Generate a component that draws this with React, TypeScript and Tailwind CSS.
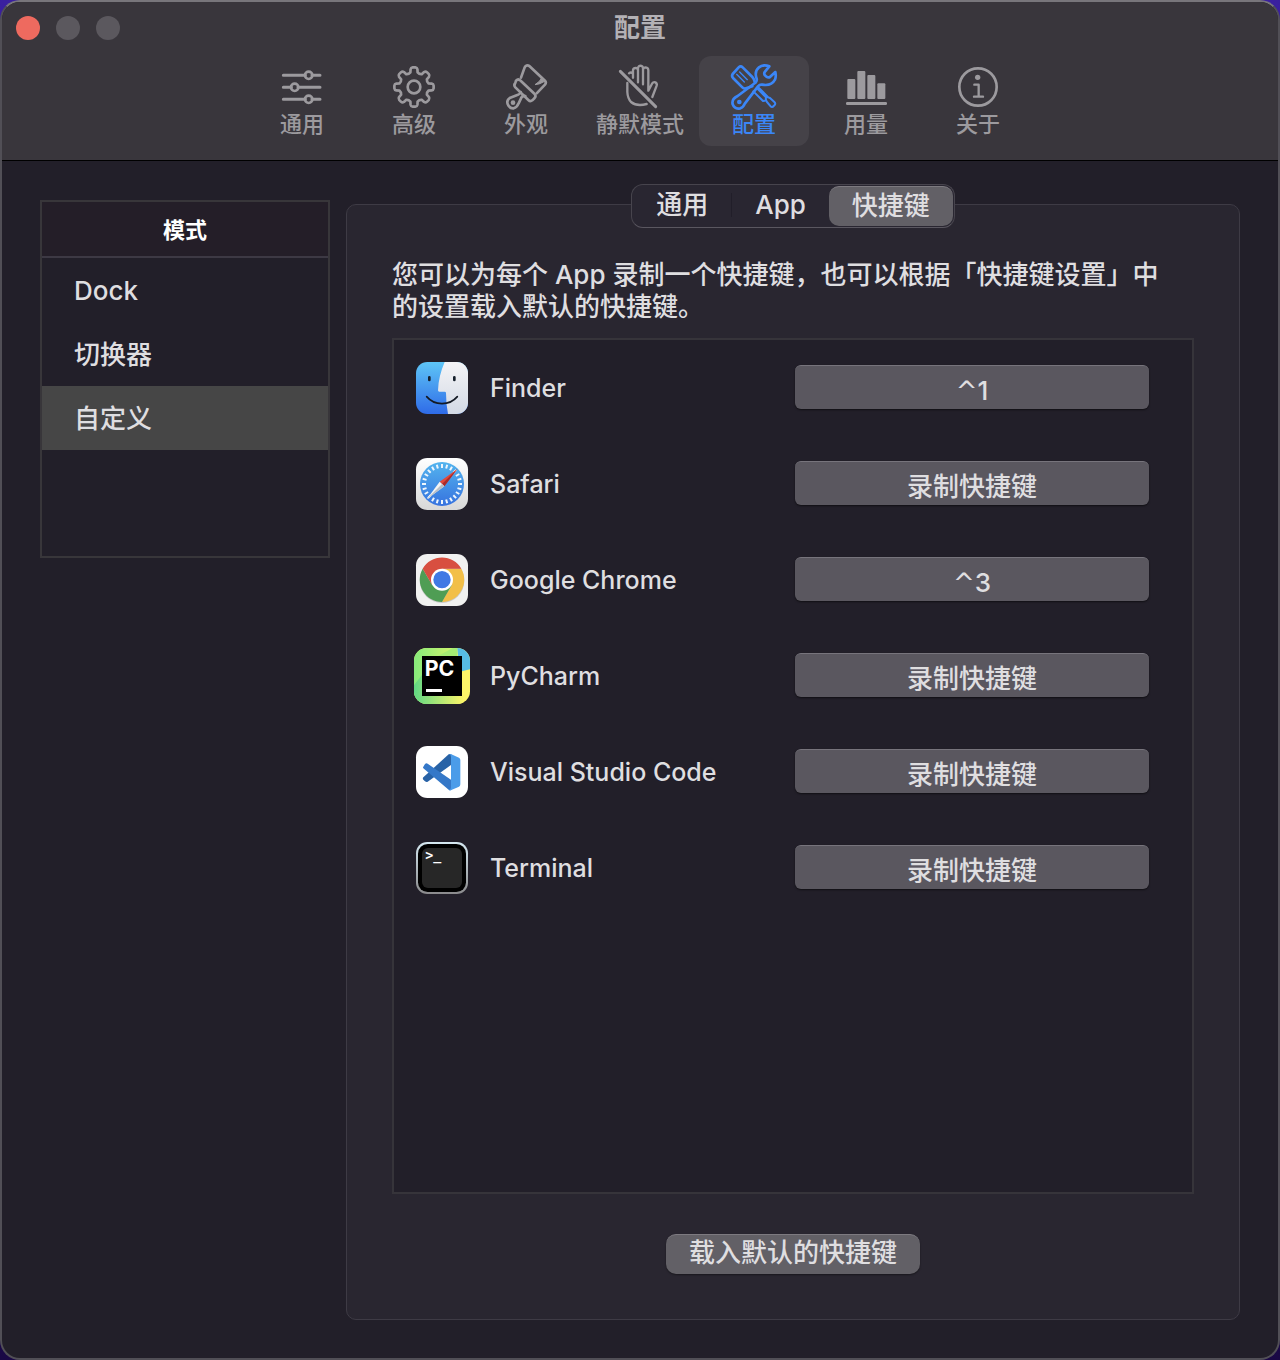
import { useState, type ReactNode } from "react";

type IconProps = { viewBox: string; children: ReactNode };

function ToolIcon({ viewBox, children }: IconProps) {
  return (
    <svg
      viewBox={viewBox}
      className="h-12 w-14"
      fill="none"
      stroke="currentColor"
      strokeWidth={8}
      strokeLinecap="round"
      strokeLinejoin="round"
      aria-hidden="true"
    >
      {children}
    </svg>
  );
}

function gearPath() {
  const point = (r: number, deg: number) => {
    const a = ((deg - 90) * Math.PI) / 180;
    return `${(r * Math.cos(a)).toFixed(1)} ${(r * Math.sin(a)).toFixed(1)}`;
  };
  let d = "";
  for (let i = 0; i < 8; i++) {
    const c = i * 45;
    d += `${i === 0 ? "M" : "L"}${point(45, c - 14)}`;
    d += `L${point(54, c - 11)}Q${point(59, c - 9)} ${point(59, c - 4)}`;
    d += `L${point(59, c + 4)}Q${point(59, c + 9)} ${point(54, c + 11)}`;
    d += `L${point(45, c + 14)}Q${point(41, c + 22.5)} ${point(45, c + 31)}`;
  }
  return d + "Z";
}

const toolbar = [
  {
    label: "通用",
    icon: (
      <ToolIcon viewBox="-84 -72 168 144">
        <path d="M-56-35H10M30-35H54M-56 1H-32M-12 1H54M-56 37H10M30 37H54" strokeWidth={9} />
        <circle cx="20" cy="-35" r="11" />
        <circle cx="-22" cy="1" r="11" />
        <circle cx="20" cy="37" r="11" />
      </ToolIcon>
    ),
  },
  {
    label: "高级",
    icon: (
      <ToolIcon viewBox="-84 -72 168 144">
        <path d={gearPath()} />
        <circle r="19" />
      </ToolIcon>
    ),
  },
  {
    label: "外观",
    icon: (
      <ToolIcon viewBox="54 39 168 144">
        <path d="M123 83 134 52Q139 43 148 48L195 92Q200 98 195 104L170 130" />
        <path d="M186 82Q181 95 165 104Q180 103 192 95Z" fill="currentColor" strokeWidth={3} />
        <path d="M108 92Q115 85 122 92L164 132Q169 138 164 144L157 151Q151 156 145 150L106 112Q100 105 106 99Z" />
        <path d="M122 126Q120 133 110 136L91 143Q79 150 83 162Q88 176 101 175Q111 172 116 160L123 145Q126 136 136 138" />
        <circle cx="99" cy="158" r="7" fill="currentColor" stroke="none" />
      </ToolIcon>
    ),
  },
  {
    label: "静默模式",
    icon: (
      <ToolIcon viewBox="393 39 168 144">
        <path d="M418 64 524 170" strokeWidth={9} />
        <path d="M444 70Q450 65 456 71V83M456 71V60Q457 54 464 54Q471 54 471 61V97M471 60V54Q473 47 479 47Q486 48 486 55V103M486 58Q488 52 494 52Q502 53 502 61V122L513 101Q517 95 523 97Q529 100 527 107L514 141" strokeWidth={7} />
        <path d="M439 99V126Q440 145 450 156Q467 170 497 162" strokeWidth={7} />
      </ToolIcon>
    ),
  },
  {
    label: "配置",
    icon: (
      <ToolIcon viewBox="108 39 168 144">
        <path d="M187 109 168 115Q162 117 157 112L129 84Q124 78 128 72L146 52Q152 46 158 52L187 81Q192 86 194 95L196 98" />
        <path d="M140 73 163 96M149 66 172 89" strokeWidth={4} />
        <path d="M202 116 228 142Q226 150 231 156L242 169Q246 174 251 168L254 165Q258 161 253 156L240 144Q234 141 229 141M190 124 219 153L224 152M206 113 235 142" strokeWidth={6} />
        <path d="M238 49Q220 42 207 52Q192 65 200 86Q202 93 195 99L143 138Q124 147 128 163Q134 179 151 175Q160 172 165 160L204 109Q209 103 217 104Q244 109 255 89Q259 80 256 66L240 81Q235 84 229 80L224 75Q221 70 225 65Z" />
        <circle cx="148" cy="156" r="7" fill="currentColor" stroke="none" />
      </ToolIcon>
    ),
  },
  {
    label: "用量",
    icon: (
      <ToolIcon viewBox="444 39 168 144">
        <g fill="currentColor" stroke="none">
          <rect x="472" y="87" width="24" height="60" rx="3" />
          <rect x="502" y="63" width="24" height="84" rx="3" />
          <rect x="532" y="75" width="24" height="72" rx="3" />
          <rect x="562" y="100" width="24" height="47" rx="3" />
          <rect x="468" y="156" width="123" height="9" rx="4" />
        </g>
      </ToolIcon>
    ),
  },
  {
    label: "关于",
    icon: (
      <ToolIcon viewBox="150 189 168 144">
        <circle cx="234" cy="261" r="56" />
        <circle cx="233" cy="232" r="8" fill="currentColor" stroke="none" />
        <path d="M223 254H236V289M222 290H249" strokeWidth={7} />
      </ToolIcon>
    ),
  },
];

function AppSvg({ children }: { children: ReactNode }) {
  return (
    <svg viewBox="0 0 168 168" className="size-14 shrink-0" aria-hidden="true">
      {children}
    </svg>
  );
}

const ticks = Array.from({ length: 24 }, (_, i) => i * 15);

const apps = [
  {
    name: "Finder",
    digit: "1",
    icon: (
      <AppSvg>
        <defs>
          <linearGradient id="finder-l" x1="0" y1="0" x2="0" y2="1">
            <stop stopColor="#5ec5f6" />
            <stop offset="1" stopColor="#2f6be8" />
          </linearGradient>
          <linearGradient id="finder-r" x1="0" y1="0" x2="0" y2="1">
            <stop stopColor="#f4f4f6" />
            <stop offset="1" stopColor="#d3dae5" />
          </linearGradient>
          <clipPath id="finder-c">
            <rect x="6" y="6" width="156" height="156" rx="34" />
          </clipPath>
        </defs>
        <g clipPath="url(#finder-c)">
          <rect x="6" y="6" width="156" height="156" fill="url(#finder-l)" />
          <path d="M92 6Q73 50 72 91Q72 95 76 95H92Q96 95 96 99Q96 132 102 162H162V6Z" fill="url(#finder-r)" />
        </g>
        <path d="M46 52V60M121 52V60" stroke="#16202c" strokeWidth="8" strokeLinecap="round" />
        <path d="M38 110Q56 131 84 131Q112 131 130 110" fill="none" stroke="#141a24" strokeWidth="5" strokeLinecap="round" />
      </AppSvg>
    ),
  },
  {
    name: "Safari",
    icon: (
      <AppSvg>
        <defs>
          <linearGradient id="safari-b" x1="0" y1="0" x2="0" y2="1">
            <stop stopColor="#ffffff" />
            <stop offset="1" stopColor="#d8d8d8" />
          </linearGradient>
          <linearGradient id="safari-d" x1="0" y1="0" x2="0" y2="1">
            <stop stopColor="#54b4ee" />
            <stop offset="1" stopColor="#3672df" />
          </linearGradient>
        </defs>
        <rect x="6" y="6" width="156" height="156" rx="34" fill="url(#safari-b)" />
        <circle cx="84" cy="84" r="66" fill="url(#safari-d)" />
        <g stroke="#eef6fd" strokeWidth="6">
          {ticks.map((a) => (
            <path key={a} d="M84 24V36" transform={`rotate(${a} 84 84)`} />
          ))}
        </g>
        <path d="M130 39 77 77 91 91Z" fill="#e2483c" />
        <path d="M130 39 84 84 91 91Z" fill="#a92b2b" />
        <path d="M38 130 77 77 91 91Z" fill="#f4f4f4" />
        <path d="M38 130 84 84 91 91Z" fill="#b9bfc6" />
      </AppSvg>
    ),
  },
  {
    name: "Google Chrome",
    digit: "3",
    icon: (
      <AppSvg>
        <rect x="6" y="6" width="156" height="156" rx="34" fill="#f1f1f0" />
        <circle cx="84" cy="86" r="67" fill="#c9c9c9" />
        <path d="M84 50H142A67 67 0 0 1 84 150L113 100Z" fill="#f2bf48" />
        <path d="M26 50A67 67 0 0 0 84 150L113 100 84 83 55 100Z" fill="#4f9d54" />
        <path d="M26 50 55 100 60 70 84 50H142A67 67 0 0 0 26 50Z" fill="#d84f40" />
        <circle cx="84" cy="83" r="33" fill="#ffffff" />
        <circle cx="84" cy="83" r="26" fill="#4079e4" />
      </AppSvg>
    ),
  },
  {
    name: "PyCharm",
    icon: (
      <AppSvg>
        <defs>
          <linearGradient id="py-g" x1="0" y1="0" x2="1" y2="0">
            <stop stopColor="#86ea7b" />
            <stop offset="1" stopColor="#d6f56c" />
          </linearGradient>
          <linearGradient id="py-b" x1="0" y1="0" x2="1" y2="0">
            <stop stopColor="#60d884" />
            <stop offset="1" stopColor="#fcf568" />
          </linearGradient>
          <clipPath id="py-c">
            <rect width="168" height="168" rx="38" />
          </clipPath>
        </defs>
        <g clipPath="url(#py-c)">
          <rect width="168" height="168" fill="#fcf568" />
          <path d="M0 0H130V168H0Z" fill="url(#py-g)" />
          <path d="M0 112 24 80V144H150V168H0Z" fill="url(#py-b)" />
          <path d="M72 24 116 0H130V24Z" fill="#a4ec74" />
          <path d="M130 0H168V64L144 70V24H132Z" fill="#57bde4" />
        </g>
        <rect x="24" y="24" width="120" height="120" fill="#000000" />
        <text x="32" y="84" fill="#ffffff" fontFamily="Inter, sans-serif" fontWeight="700" fontSize="64">PC</text>
        <rect x="36" y="123" width="48" height="9" fill="#ffffff" />
      </AppSvg>
    ),
  },
  {
    name: "Visual Studio Code",
    icon: (
      <AppSvg>
        <rect x="6" y="6" width="156" height="156" rx="34" fill="#ffffff" />
        <path d="M28 100 104 31Q107 29 112 31V62L41 113Q37 115 33 112L28 107Q25 103 28 100Z" fill="#2862a6" />
        <path d="M28 68 33 60Q37 56 41 59L112 108V138Q107 140 104 137L28 73Q26 70 28 68Z" fill="#3578c8" />
        <path d="M104 31Q107 29 112 31L135 41Q139 43 139 48V121Q139 126 135 128L112 138Q107 140 104 137Q111 139 111 130V39Q111 30 104 31Z" fill="#4b9ce9" />
      </AppSvg>
    ),
  },
  {
    name: "Terminal",
    icon: (
      <AppSvg>
        <defs>
          <linearGradient id="term-b" x1="0" y1="0" x2="0" y2="1">
            <stop stopColor="#d6e9f2" />
            <stop offset="1" stopColor="#8a8a8c" />
          </linearGradient>
        </defs>
        <rect x="6" y="6" width="156" height="156" rx="34" fill="url(#term-b)" />
        <rect x="12" y="12" width="144" height="144" rx="29" fill="#000000" />
        <rect x="24" y="24" width="120" height="120" rx="18" fill="#272727" />
        <text x="34" y="61" fill="#ffffff" fontFamily="'DejaVu Sans Mono', monospace" fontWeight="700" fontSize="40">&gt;_</text>
      </AppSvg>
    ),
  },
];

const modes = ["Dock", "切换器", "自定义"];
const tabs = ["通用", "App", "快捷键"];

export default function App() {
  const [section, setSection] = useState("配置");
  const [mode, setMode] = useState("自定义");
  const [tab, setTab] = useState("快捷键");

  return (
    <div className="flex min-h-screen bg-linear-to-b from-[#3a209f] to-[#1a0845] font-['Inter','Noto_Sans_CJK_SC',sans-serif] text-[#dfdee0]">
      <div className="flex flex-1 flex-col overflow-hidden rounded-[20px] border-2 border-[#514f56] border-t-[#78767b] bg-[#221f29]">
        <header className="relative border-b border-black bg-[#39363c] pb-3.5">
          <div className="absolute top-3.5 left-3.5 flex gap-4">
            <button aria-label="关闭" className="size-6 rounded-full bg-[#ee6a5f]" />
            <button aria-label="最小化" className="size-6 rounded-full bg-[#5b585e]" />
            <button aria-label="缩放" className="size-6 rounded-full bg-[#5b585e]" />
          </div>
          <h1 className="pt-1.5 text-center text-[26px] leading-10 font-bold text-[#b3b1b5]">配置</h1>
          <nav className="mt-2 flex justify-center gap-0.5">
            {toolbar.map(({ label, icon }) => (
              <button
                key={label}
                onClick={() => setSection(label)}
                className={`flex h-[90px] min-w-[110px] flex-col items-center rounded-xl px-[13px] pt-[7px] text-[22px] leading-[26px] font-medium ${
                  section === label ? "bg-[#454248] text-[#3b86f7]" : "text-[#9c9a9e]"
                }`}
              >
                {icon}
                <span>{label}</span>
              </button>
            ))}
          </nav>
        </header>

        <main className="flex flex-1 items-stretch gap-4 px-[38px] pt-[23px] pb-[38px]">
          <aside className="mt-4 h-[358px] w-[290px] shrink-0 border-2 border-[#38363a]">
            <h2 className="h-14 border-b-2 border-[#3d3944] bg-[#241e28] text-center text-[22px] leading-[56px] font-bold text-white">
              模式
            </h2>
            <ul>
              {modes.map((m) => (
                <li key={m}>
                  <button
                    onClick={() => setMode(m)}
                    className={`block h-16 w-full px-8 pt-0.5 text-left text-[26px] leading-[62px] font-medium ${mode === m ? "bg-[#464646]" : ""}`}
                  >
                    {m}
                  </button>
                </li>
              ))}
            </ul>
          </aside>

          <section className="flex flex-1 flex-col">
            <div role="tablist" className="z-10 -mb-6 flex h-11 self-center rounded-xl border border-[#47444d] border-b-[#5a5760] bg-[#292631] p-px">
              {tabs.map((t, i) => (
                <button
                  key={t}
                  role="tab"
                  aria-selected={tab === t}
                  onClick={() => setTab(t)}
                  className={`flex items-center rounded-[10px] px-[23px] pb-0.5 text-[26px] leading-8 font-medium ${
                    tab === t ? "border-t border-[#7d7a80] bg-[#626066]" : ""
                  }`}
                >
                  {t}
                  {i === 0 && <span className="-mr-[23px] ml-[23px] h-6 w-px bg-[#211e29]" />}
                </button>
              ))}
            </div>

            <div className="flex flex-1 flex-col rounded-[10px] border border-[#3e3b45] bg-[#292630] px-[45px] pt-[54px] pb-[45px]">
              <p className="pr-5 text-[26px] leading-8 font-medium">
                您可以为每个 App 录制一个快捷键，也可以根据「快捷键设置」中的设置载入默认的快捷键。
              </p>
              <ul className="mt-[15px] flex-1 border-2 border-[#36343a] bg-[#221f29]">
                {apps.map(({ name, digit, icon }) => (
                  <li key={name} className="flex h-24 items-center pr-[43px] pl-5">
                    {icon}
                    <span className="ml-5 flex-1 text-[25px] leading-8 font-medium">{name}</span>
                    <button
                      aria-label={`${name} 快捷键`}
                      className="mb-0.5 h-11 w-[354px] rounded-md border-t border-[#77747c] bg-[#5a575f] pt-1.5 text-[26px] leading-8 font-medium shadow-[0_1px_2px_#0008]"
                    >
                      {digit ? (
                        <>
                          <span className="font-['DejaVu_Sans',sans-serif]">^</span>
                          {digit}
                        </>
                      ) : (
                        "录制快捷键"
                      )}
                    </button>
                  </li>
                ))}
              </ul>
              <button className="mt-10 h-10 self-center rounded-[10px] border-t border-[#7d7a80] bg-[#626066] px-[23px] pb-1 text-[26px] leading-8 font-medium shadow-[0_1px_2px_#0006]">
                载入默认的快捷键
              </button>
            </div>
          </section>
        </main>
      </div>
    </div>
  );
}
